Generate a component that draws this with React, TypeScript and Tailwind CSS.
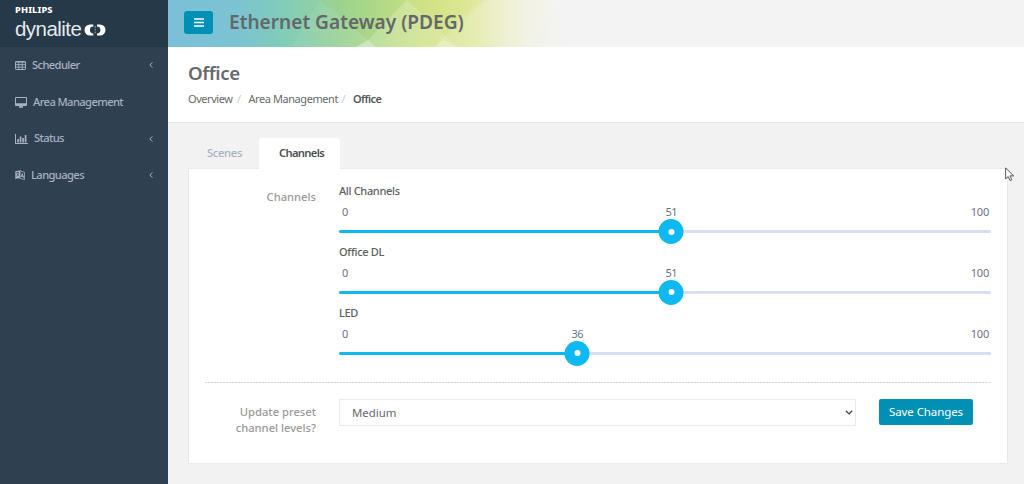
import { useState } from "react";

type Channel = { name: string; level: number };

const TableIcon = () => (
  <svg viewBox="0 0 11 9" className="h-[9px] w-[11px]" fill="none" stroke="currentColor">
    <rect x="0.5" y="0.5" width="10" height="8" rx="0.6" />
    <path d="M0.5 1.1h10M0.5 3.6h10M0.5 6.1h10M3.8 1v7.5M7.2 1v7.5" strokeWidth="0.9" />
  </svg>
);

const DesktopIcon = () => (
  <svg viewBox="0 0 12 11" className="h-[11px] w-[12px]" fill="currentColor">
    <path
      fillRule="evenodd"
      d="M1 0h10a1 1 0 0 1 1 1v7a1 1 0 0 1-1 1H7.6l.6 1.4v.4H3.8v-.4L4.4 9H1a1 1 0 0 1-1-1V1a1 1 0 0 1 1-1zM1 1v5.2h10V1z"
    />
  </svg>
);

const ChartIcon = () => (
  <svg viewBox="0 0 13 10" className="h-[10px] w-[13px]" fill="currentColor">
    <path d="M0 0h1v9h12v1H0zM2.2 5h1.7v3.4H2.2zM4.7 2.5h1.7v5.9H4.7zM7.2 4h1.7v4.4H7.2zM9.7 1h1.7v7.4H9.7z" />
  </svg>
);

const LanguageIcon = () => (
  <svg viewBox="0 0 11 11" className="h-[10px] w-[10px]">
    <path d="M0.3 1.3L6 0.2v8.4L0.3 9.9z" fill="currentColor" />
    <path d="M5.5 0.9l5 1.6v8L4.5 8.9" fill="none" stroke="currentColor" strokeWidth="0.9" />
    <path d="M1.3 3.2l3-.8M2.8 2v1.2M1.5 6.8c1.3-.7 2.2-2 2.3-3.7M2 4.5l2.3 1.8" stroke="#2f4050" strokeWidth="0.7" fill="none" />
    <path d="M6.5 7.8L8 4l1.5 4.7M7 6.7l2 .5" stroke="currentColor" strokeWidth="1.1" fill="none" />
  </svg>
);

const menuItems = [
  { label: "Scheduler", icon: <TableIcon />, arrow: true },
  { label: "Area Management", icon: <DesktopIcon />, arrow: false },
  { label: "Status", icon: <ChartIcon />, arrow: true },
  { label: "Languages", icon: <LanguageIcon />, arrow: true },
];

const Sidebar = () => (
  <aside className="h-full w-[168px] shrink-0 bg-[#2f4050] text-[#a7b1c2]">
    <div className="h-[47px] bg-[#263949] pt-[5px] pl-[15px] text-white">
      <p className="text-[9.3px] leading-[10px] font-extrabold tracking-[0.1px]">PHILIPS</p>
      <div className="flex items-center">
        <span className="w-[69px] font-['Liberation_Sans',sans-serif] text-[20.5px] leading-[27px] tracking-[-0.55px] text-[#e4e9ec]">
          dynalite
        </span>
        <svg viewBox="0 0 22 12" className="mt-[3px] h-[12px] w-[22px]">
          <path d="M9.3 0.5H6a5.5 5.5 0 0 0 0 11h3.3V9.4a3.4 3.4 0 0 1 0-6.8z" fill="#fff" />
          <path d="M13 0.5h3a5.5 5.5 0 0 1 0 11h-3V9.4a3.4 3.4 0 0 0 0-6.8z" fill="#fff" />
          <path d="M11.2 2v8" stroke="#fff" strokeWidth="0.8" strokeDasharray="1.6 1.2" opacity="0.7" />
        </svg>
      </div>
    </div>
    <nav>
      {menuItems.map((item) => (
        <a
          key={item.label}
          className="flex h-[36.7px] items-center gap-[6px] px-[15px] text-[11.2px] font-medium tracking-[-0.62px]"
        >
          {item.icon}
          <span className="whitespace-nowrap">{item.label}</span>
          {item.arrow && (
            <svg viewBox="0 0 4 6" className="ml-auto h-[6px] w-[4px]" fill="none" stroke="currentColor">
              <path d="M3.4 0.4L0.8 3l2.6 2.6" />
            </svg>
          )}
        </a>
      ))}
    </nav>
  </aside>
);

const Topbar = () => (
  <header className="relative flex h-[47px] shrink-0 items-center bg-[linear-gradient(90deg,#7bbfd8_0px,#7bc3d2_70px,#80cbbb_110px,#90d0a5_150px,#a6d692_190px,#c3df8c_230px,#d5e48e_270px,#e2eaa6_305px,#eceeca_335px,#f1f2e2_360px,#f3f3f3_395px)]">
    <svg className="absolute inset-0 h-[47px] w-[420px]" viewBox="0 0 420 47">
      {/* Overlapping light facets */}
      <path d="M152 0h87l-39 40z" fill="#a2d168" opacity="0.2" />
      <path d="M152 0l56 47h-84z" fill="#fff" opacity="0.06" />
      <path d="M188 47l12-7 8 7z" fill="#fff" opacity="0.35" />
      <path d="M239 0l50 47h-81l-8-7z" fill="#fff" opacity="0.15" />
      <path d="M239 0h78l-45 31z" fill="#d3e262" opacity="0.16" />
      <path d="M266 47l9-8 14 8z" fill="#fff" opacity="0.3" />
      <path d="M317 0l-43 39 15 8h63L397 0z" fill="#fff" opacity="0.12" />
      <path d="M352 47l45-47h23v47z" fill="#f3f3f3" opacity="0.4" />
    </svg>
    <button className="relative mb-[2px] ml-[16px] flex h-[23px] w-[29px] items-center justify-center rounded-[3px] bg-[#0090b5]">
      <svg viewBox="0 0 10 9" className="h-[9px] w-[10px]" stroke="#fff" strokeWidth="1.5">
        <path d="M0 1h10M0 4.5h10M0 8h10" />
      </svg>
    </button>
    <h1 className="relative mb-[3px] ml-[16px] text-[19.1px] leading-6 font-semibold whitespace-nowrap text-[#65686b]">
      Ethernet Gateway (PDEG)
    </h1>
  </header>
);

const PageHeading = () => (
  <div className="h-[76px] shrink-0 border-b border-[#e4e6e7] bg-white pl-[20px] text-[#676a6c]">
    <h2 className="pt-[13px] text-[18.7px] leading-[25px] font-semibold tracking-[-0.4px]">Office</h2>
    <div className="flex pt-[6px] text-[11px] leading-4 tracking-[-0.43px]">
      <span className="w-[45px] whitespace-nowrap">Overview</span>
      <span className="w-[15.5px] pl-[4px] text-[#ccc]">/</span>
      <span className="w-[89px] whitespace-nowrap">Area Management</span>
      <span className="w-[15.5px] pl-[4px] text-[#ccc]">/</span>
      <span className="font-semibold tracking-[-0.6px] text-[#56595b]">Office</span>
    </div>
  </div>
);

const ChannelSlider = ({ channel }: { channel: Channel }) => {
  // the 25px handle stays inside the track at both ends
  const position = `calc(12.5px + (100% - 25px) * ${channel.level / 100})`;

  return (
    <div className="h-[60.8px] text-[11px]">
      <p className="h-[19px] leading-4 font-medium tracking-[-0.33px] text-[#5b5e60]">{channel.name}</p>
      <div className="relative flex h-[24px] justify-between pr-[2px] pl-[3px] leading-[20px] text-[#6b7187]">
        <span>0</span>
        <span className="absolute -translate-x-1/2 tracking-[-0.5px]" style={{ left: position }}>
          {channel.level}
        </span>
        <span className="tracking-[-0.2px]">100</span>
      </div>
      <div className="relative mt-[4px] h-[3px] rounded-full bg-[#d7dff5]">
        <div className="h-[3px] rounded-full bg-[#0db9f0]" style={{ width: position }} />
        <div
          className="absolute top-[-11px] flex size-[25px] -translate-x-1/2 items-center justify-center rounded-full bg-[#0db9f0]"
          style={{ left: position }}
        >
          <span className="size-[6px] rounded-full bg-white" />
        </div>
      </div>
    </div>
  );
};

const channels: Channel[] = [
  { name: "All Channels", level: 51 },
  { name: "Office DL", level: 51 },
  { name: "LED", level: 36 },
];

const ChannelPanel = () => {
  const [preset, setPreset] = useState("Medium");

  return (
    <div className="h-[296px] border border-[#e7eaec] bg-white px-[16px] pt-[14px]">
      <div className="h-[200px]">
        <div className="flex h-[199px]">
          <p className="w-[111px] pt-[6px] text-right text-[11.2px] leading-4 font-medium text-[#999]">Channels</p>
          <div className="ml-[23px] w-[652px]">
            {channels.map((channel) => (
              <ChannelSlider key={channel.name} channel={channel} />
            ))}
          </div>
        </div>
        <div className="h-px bg-[repeating-linear-gradient(90deg,#d6d6d6_0px,#d6d6d6_2px,#f2f2f2_2px,#f2f2f2_3px)]" />
      </div>
      <div className="flex pt-[16px]">
        <p className="w-[111px] pt-[5px] text-right text-[11.2px] leading-4 font-medium text-[#999]">
          Update preset
          <br />
          channel levels?
        </p>
        <div className="relative ml-[23px] h-[27px] w-[517px]">
          <select
            value={preset}
            onChange={(e) => setPreset(e.target.value)}
            className="h-full w-full appearance-none border border-[#e9eaeb] bg-white pl-[12px] text-[11.4px] text-[#676a6c]"
          >
            <option>High</option>
            <option>Medium</option>
            <option>Low</option>
          </select>
          <svg viewBox="0 0 8 5" className="absolute top-[11px] right-[3px] h-[5px] w-[8px]" fill="none" stroke="#444" strokeWidth="1.3">
            <path d="M0.8 0.7L4 3.9 7.2 0.7" />
          </svg>
        </div>
        <button className="ml-[23px] h-[26px] w-[94px] rounded-[2px] bg-[#0090b5] text-[11.5px] tracking-[-0.1px] whitespace-nowrap text-white">
          Save Changes
        </button>
      </div>
    </div>
  );
};

const App = () => {
  return (
    <div className="relative flex h-[484px] w-[1024px] overflow-hidden bg-[#f2f2f2] font-['Noto_Sans',sans-serif]">
      <Sidebar />
      <main className="flex flex-1 flex-col">
        <Topbar />
        <PageHeading />
        <div className="pt-[15px] pr-[16px] pl-[20px]">
          <div className="flex h-[30px] text-[11.2px] font-medium">
            <button className="w-[71px] pl-[2px] tracking-[-0.3px] text-[#a7b1c2]">Scenes</button>
            <button className="h-[31px] w-[81px] rounded-t-[3px] bg-white pl-[4px] font-semibold tracking-[-0.65px] text-[#4c4f52]">
              Channels
            </button>
          </div>
          <ChannelPanel />
        </div>
      </main>

      {/* Mouse pointer */}
      <svg viewBox="0 0 11 16" className="absolute top-[167px] left-[1005px] h-[15px] w-[10px]">
        <path d="M0.7 0.8v12l2.8-2.6 2 4.4 2-.9-2-4.2h4z" fill="#fff" stroke="#333" strokeWidth="0.9" />
      </svg>
    </div>
  );
};

export default App;
